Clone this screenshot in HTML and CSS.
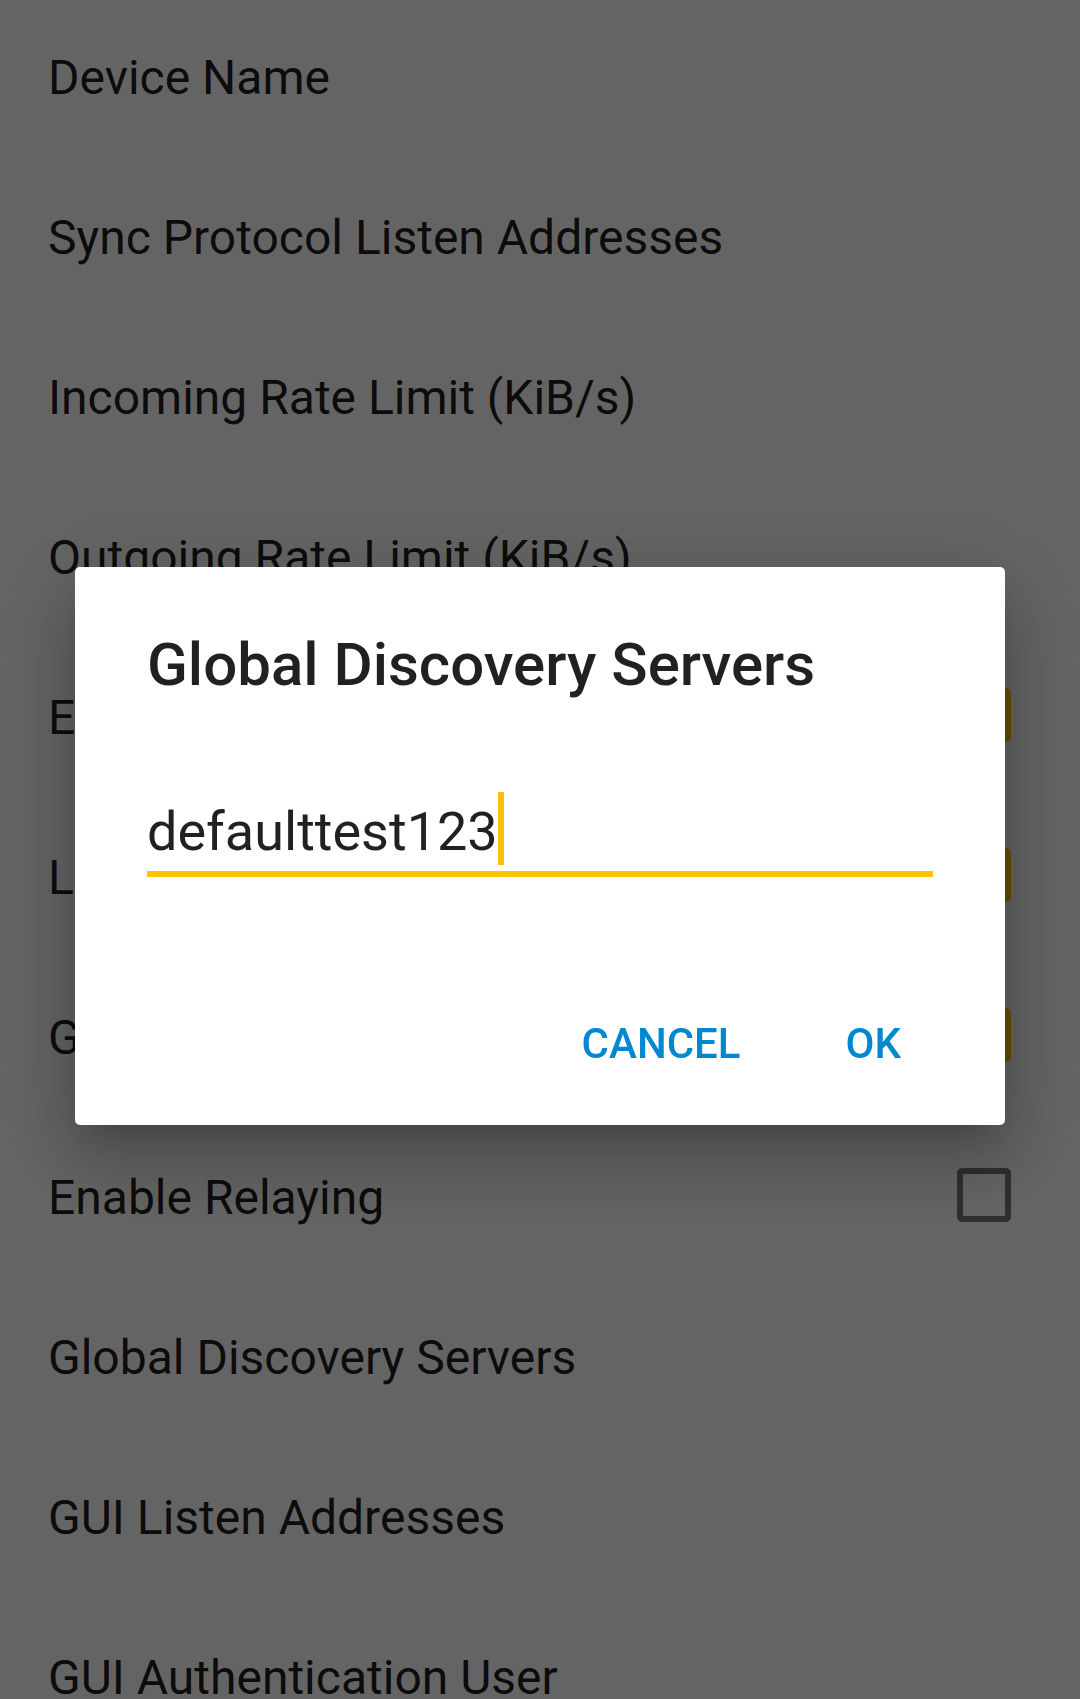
FILE: index.html
```html
<!DOCTYPE html>
<html lang="en">
<head>
<meta charset="utf-8">
<title>Settings</title>
<link rel="stylesheet" href="styles.css">
</head>
<body>
<div class="prefs">
  <div class="pref"><span class="pref-title">Device Name</span></div>
  <div class="pref"><span class="pref-title">Sync Protocol Listen Addresses</span></div>
  <div class="pref"><span class="pref-title">Incoming Rate Limit (KiB/s)</span></div>
  <div class="pref"><span class="pref-title">Outgoing Rate Limit (KiB/s)</span></div>
  <div class="pref"><span class="pref-title">Enable NAT Traversal</span><span class="check checked"></span></div>
  <div class="pref"><span class="pref-title">Local Discovery</span><span class="check checked"></span></div>
  <div class="pref"><span class="pref-title">Global Discovery</span><span class="check checked"></span></div>
  <div class="pref"><span class="pref-title">Enable Relaying</span><span class="check"></span></div>
  <div class="pref"><span class="pref-title">Global Discovery Servers</span></div>
  <div class="pref"><span class="pref-title">GUI Listen Addresses</span></div>
  <div class="pref"><span class="pref-title">GUI Authentication User</span></div>
</div>

<div class="scrim"></div>

<div class="overlay">
  <div class="dialog">
    <div class="dialog-title">Global Discovery Servers</div>
    <div class="field">
      <div class="field-row"><span class="field-text">defaulttest123</span><span class="caret"></span></div>
      <div class="field-line"></div>
    </div>
    <div class="actions">
      <span class="btn">CANCEL</span>
      <span class="btn">OK</span>
    </div>
  </div>
</div>
</body>
</html>
```

FILE: styles.css
```css
html, body {
  margin: 0;
  padding: 0;
}

body {
  width: 1080px;
  height: 1699px;
  overflow: hidden;
  background: #fafafa;
  font-family: Roboto, "Noto Sans", "Liberation Sans", sans-serif;
}

.prefs {
  margin-top: -2px;
}

.pref {
  height: 160px;
  display: flex;
  align-items: center;
  justify-content: space-between;
  padding: 0 69px 0 48px;
}

.pref-title {
  font-size: 48px;
  line-height: 56px;
  color: rgba(0, 0, 0, 0.9);
  white-space: nowrap;
}

.check {
  box-sizing: border-box;
  width: 54px;
  height: 54px;
  margin-top: -6px;
  border: 6px solid #757575;
  border-radius: 5px;
  flex: none;
}

.check.checked {
  background: #ffc107;
  border-color: #ffc107;
}

.scrim {
  position: fixed;
  inset: 0;
  background: rgba(0, 0, 0, 0.6);
}

.overlay {
  position: fixed;
  inset: 0;
  padding-bottom: 7px;
  display: flex;
  align-items: center;
  justify-content: center;
}

.dialog {
  box-sizing: border-box;
  width: 930px;
  background: #ffffff;
  border-radius: 5px;
  box-shadow: 0 40px 70px 6px rgba(0, 0, 0, 0.14),
              0 18px 90px 16px rgba(0, 0, 0, 0.12),
              0 20px 30px -12px rgba(0, 0, 0, 0.2);
  padding: 62px 72px 57px;
}

.dialog-title {
  font-size: 60px;
  line-height: 72px;
  font-weight: 500;
  color: rgba(0, 0, 0, 0.87);
  white-space: nowrap;
}

.field {
  margin-top: 91px;
}

.field-row {
  display: flex;
  align-items: flex-start;
  height: 73px;
}

.field-text {
  margin-top: 8px;
  font-size: 54px;
  line-height: 64px;
  color: rgba(0, 0, 0, 0.87);
}

.caret {
  width: 6px;
  height: 73px;
  margin-left: 0;
  background: #ffc107;
}

.field-line {
  margin-top: 6px;
  height: 6px;
  background: #ffc107;
}

.actions {
  margin-top: 143px;
  display: flex;
  justify-content: flex-end;
  gap: 105px;
  padding-right: 32px;
}

.btn {
  font-size: 42px;
  line-height: 48px;
  font-weight: 500;
  color: #0288d1;
}
```
